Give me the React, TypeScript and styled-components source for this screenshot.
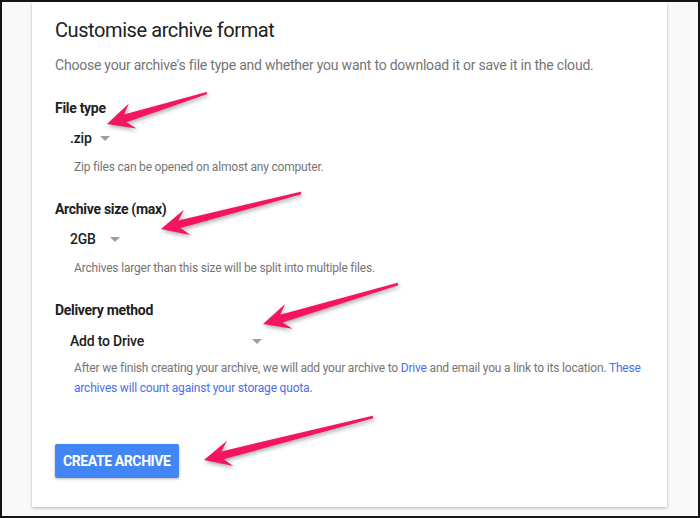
import * as React from "react"
import styled, { createGlobalStyle } from "styled-components"

const GlobalStyle = createGlobalStyle`
  body {
    margin: 0;
    background: #f9f9f9;
    font-family: Roboto, "Liberation Sans", Arial, sans-serif;
  }
`

const Frame = styled.div`
  position: relative;
  width: 700px;
  height: 518px;
  box-sizing: border-box;
  border: 2px solid #141414;
  background: #f9f9f9;
  padding: 0 31px 9px 30px;
  display: flex;
  flex-direction: column;
`

const Card = styled.section`
  flex: 1;
  background: #fff;
  box-shadow: 0 1px 3px rgba(0, 0, 0, 0.28);
  padding: 16px 22px 29px 23px;
  display: flex;
  flex-direction: column;
  color: #212121;
`

const Title = styled.h2`
  margin: 0;
  font-size: 20px;
  line-height: 24px;
  font-weight: 400;
  letter-spacing: -0.42px;
  color: #212121;
`

const Intro = styled.p`
  margin: 13px 0 0;
  font-size: 14px;
  line-height: 20px;
  letter-spacing: -0.22px;
  color: #757575;
`

const Section = styled.div<{ $gap: number }>`
  margin-top: ${(p) => p.$gap}px;
  display: flex;
  flex-direction: column;
`

const Label = styled.div`
  font-size: 14px;
  line-height: 20px;
  font-weight: 700;
  letter-spacing: -0.3px;
  color: #212121;
`

const Select = styled.div<{ $gap?: number }>`
  margin: ${(p) => p.$gap ?? 10}px 0 0 15px;
  display: flex;
  align-items: center;
  font-size: 14px;
  line-height: 20px;
  font-weight: 500;
  letter-spacing: -0.2px;
  color: #212121;
`

const SelectValue = styled.span<{ $width: number }>`
  width: ${(p) => p.$width}px;
`

const Caret = styled.span`
  width: 0;
  height: 0;
  border-left: 5px solid transparent;
  border-right: 5px solid transparent;
  border-top: 5px solid #9e9e9e;
`

const Hint = styled.p<{ $gap?: number }>`
  margin: ${(p) => p.$gap ?? 9}px 0 0 19px;
  font-size: 12px;
  line-height: 20px;
  letter-spacing: -0.19px;
  color: #757575;
`

const Link = styled.a`
  color: #4a6ef0;
  text-decoration: none;
`

const Button = styled.button`
  align-self: flex-start;
  margin-top: 46px;
  height: 34px;
  padding: 0 8px;
  border: 0;
  border-radius: 2px;
  background: #4285f4;
  color: #fff;
  font-family: Roboto, "Liberation Sans", Arial, sans-serif;
  font-size: 14px;
  font-weight: 700;
  letter-spacing: -0.4px;
  box-shadow: 0 1px 3px rgba(0, 0, 0, 0.3);
  cursor: pointer;
`

const Overlay = styled.svg`
  position: absolute;
  left: -2px;
  top: -2px;
  width: 700px;
  height: 518px;
  pointer-events: none;
  filter: drop-shadow(1px 2px 2px rgba(0, 0, 0, 0.35));
`

type Pt = [number, number]

// annotation arrows: [tail, tip]
const arrows: [Pt, Pt][] = [
  [[207, 93], [107, 124]],
  [[301, 193], [161, 229]],
  [[398, 284], [263, 324]],
  [[373, 417], [204, 460]],
]

function arrowShape(tail: Pt, tip: Pt) {
  const dx = tip[0] - tail[0]
  const dy = tip[1] - tail[1]
  const len = Math.hypot(dx, dy)
  const ux = dx / len
  const uy = dy / len
  const nx = -uy
  const ny = ux
  const at = (dist: number, off: number): Pt => [
    tip[0] - ux * dist + nx * off,
    tip[1] - uy * dist + ny * off,
  ]
  const pts: Pt[] = [
    [tail[0] + nx * 1.2, tail[1] + ny * 1.2],
    at(19, 4),
    at(27, 13),
    tip,
    at(27, -13),
    at(19, -4),
    [tail[0] - nx * 1.2, tail[1] - ny * 1.2],
  ]
  return pts.map((p) => p.map((v) => v.toFixed(1)).join(",")).join(" ")
}

const App = () => (
  <>
    <GlobalStyle />
    <Frame>
      <Card>
        <Title>Customise archive format</Title>
        <Intro>
          Choose your archive's file type and whether you want to download it or save it in the cloud.
        </Intro>

        <Section $gap={23}>
          <Label>File type</Label>
          <Select>
            <SelectValue $width={30}>.zip</SelectValue>
            <Caret />
          </Select>
          <Hint>Zip files can be opened on almost any computer.</Hint>
        </Section>

        <Section $gap={22}>
          <Label>Archive size (max)</Label>
          <Select>
            <SelectValue $width={40}>2GB</SelectValue>
            <Caret />
          </Select>
          <Hint>Archives larger than this size will be split into multiple files.</Hint>
        </Section>

        <Section $gap={22}>
          <Label>Delivery method</Label>
          <Select $gap={11}>
            <SelectValue $width={182}>Add to Drive</SelectValue>
            <Caret />
          </Select>
          <Hint $gap={7}>
            After we finish creating your archive, we will add your archive to <Link>Drive</Link> and
            email you a link to its location. <Link>These archives will count against your storage quota.</Link>
          </Hint>
        </Section>

        <Button>CREATE ARCHIVE</Button>
      </Card>
      <Overlay viewBox="0 0 700 518">
        {arrows.map(([tail, tip], i) => (
          <polygon key={i} points={arrowShape(tail, tip)} fill="#f5145f" />
        ))}
      </Overlay>
    </Frame>
  </>
)

export default App
